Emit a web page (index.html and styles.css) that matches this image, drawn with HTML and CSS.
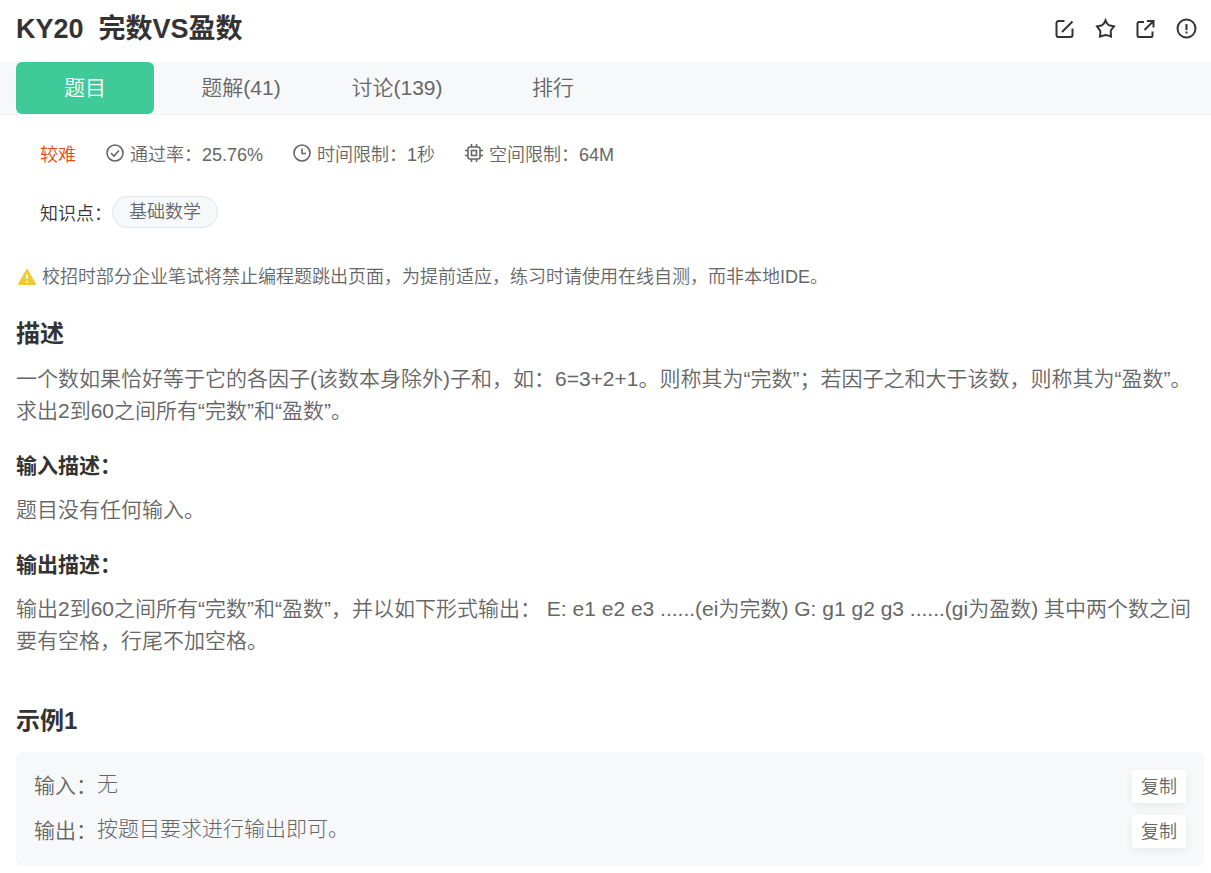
FILE: index.html
```html
<!DOCTYPE html>
<html lang="zh-CN">
<head>
<meta charset="utf-8">
<meta name="viewport" content="width=device-width, initial-scale=1">
<title>KY20 完数VS盈数</title>
<link rel="stylesheet" href="styles.css">
</head>
<body>
<header class="header">
  <h1 class="title"><span>KY20</span><span>完数VS盈数</span></h1>
  <div class="actions">
    <button class="icon-btn" type="button" aria-label="编辑"><svg viewBox="0 0 20 20"><path d="M10.500 2H4.500a2 2 0 0 0-2 2V16a2 2 0 0 0 2 2h12a2 2 0 0 0 2-2V9.500M8 13 18.500 2.500"/></svg></button>
    <button class="icon-btn" type="button" aria-label="收藏"><svg viewBox="0 0 20 20"><path d="M10.500 1.500Q12 5.200 13.800 6.200L19 7.300Q16.200 10.500 15.700 12L16 17.500Q12.300 16 10.500 16L5 17.500Q5.700 14 5.300 12L2 7.300 7.200 6.200Q9 5.200 10.500 1.500Z"/></svg></button>
    <button class="icon-btn" type="button" aria-label="分享"><svg viewBox="0 0 20 20"><path d="M8 3H3A1.500 1.500 0 0 0 1.500 4.500V16.500A1.500 1.500 0 0 0 3 18H15A1.500 1.500 0 0 0 16.500 16.500V12.500M11 2H17.500V8.500M17.500 2 8.500 11"/></svg></button>
    <button class="icon-btn" type="button" aria-label="反馈"><svg viewBox="0 0 20 20"><circle cx="9.500" cy="9.500" r="9"/><path d="M9.500 5v6M9.500 12.500v2"/></svg></button>
  </div>
</header>
<nav class="tabs">
  <a class="tab tab-active" href="#problem">题目</a>
  <a class="tab" href="#solutions">题解(41)</a>
  <a class="tab" href="#discuss">讨论(139)</a>
  <a class="tab" href="#rank">排行</a>
</nav>
<main class="content" id="problem">
  <div class="meta">
    <span class="level">较难</span>
    <span class="meta-item"><svg class="meta-icon" viewBox="0 0 18 18"><circle cx="9" cy="9" r="8"/><path d="M5 9.200 8 12l5-5.500"/></svg>通过率：25.76%</span>
    <span class="meta-item"><svg class="meta-icon" viewBox="0 0 18 18"><circle cx="9" cy="9" r="8"/><path d="M9 4.500V9.500H13"/></svg>时间限制：1秒</span>
    <span class="meta-item"><svg class="meta-icon" viewBox="0 0 18 18"><rect x="3" y="3" width="12" height="12" rx="2"/><rect x="6.500" y="6.500" width="5" height="5"/><path d="M6.500 0v3M11.500 0v3M6.500 15v3M11.500 15v3M0 6.500h3M0 11.500h3M15 6.500h3M15 11.500h3"/></svg>空间限制：64M</span>
  </div>
  <div class="topics"><span class="topics-label">知识点：</span><a class="tag" href="#math">基础数学</a></div>
  <p class="notice"><svg class="warn-icon" viewBox="0 0 18 18"><path fill="#ebcb30" d="M8.200 1.500Q9 .5 9.800 1.500L17.800 15.500Q18.200 17 17 17H1Q-.2 17 .2 15.500Z"/><path stroke="#fff" stroke-width="1.800" d="M9 6.500v4.500M9 12.800v1.800"/></svg><span>校招时部分企业笔试将禁止编程题跳出页面，为提前适应，练习时请使用在线自测，而非本地IDE。</span></p>

  <h2 class="section-title">描述</h2>
  <p class="text">一个数如果恰好等于它的各因子(该数本身除外)子和，如：6=3+2+1。则称其为“完数”；若因子之和大于该数，则称其为“盈数”。<br>求出2到60之间所有“完数”和“盈数”。</p>
  <h3 class="sub-title">输入描述：</h3>
  <p class="text">题目没有任何输入。</p>
  <h3 class="sub-title">输出描述：</h3>
  <p class="text">输出2到60之间所有“完数”和“盈数”，并以如下形式输出： E: e1 e2 e3 ......(ei为完数) G: g1 g2 g3 ......(gi为盈数) 其中两个数之间要有空格，行尾不加空格。</p>

  <h2 class="section-title example-title">示例1</h2>
  <section class="example">
    <div class="example-row"><span class="example-label">输入：</span><span class="example-value">无</span><button class="copy" type="button">复制</button></div>
    <div class="example-row"><span class="example-label">输出：</span><span class="example-value">按题目要求进行输出即可。</span><button class="copy" type="button">复制</button></div>
  </section>
</main>
</body>
</html>
```
FILE: styles.css
```css
* { box-sizing: border-box; }

body {
  margin: 0;
  background: #fff;
  color: #666;
  font-family: "Liberation Sans", "Noto Sans CJK SC", sans-serif;
  font-size: 21px;
  font-weight: 350;
  line-height: 32px;
  text-spacing-trim: space-all;
}

h1, h2, h3, p { margin: 0; }
a { color: inherit; text-decoration: none; }
svg { display: block; overflow: visible; fill: none; stroke: currentColor; stroke-width: 2; }
button { border: 0; padding: 0; font: inherit; color: inherit; cursor: pointer; }

.header {
  display: flex;
  align-items: center;
  justify-content: space-between;
  height: 62px;
  padding: 0 14px 4px 16px;
  color: #333;
}
.title { display: flex; gap: 15px; font-size: 27px; font-weight: 700; }
.actions { display: flex; gap: 21px; }
.icon-btn { width: 20px; height: 20px; background: none; }

.tabs {
  display: flex;
  gap: 18px;
  padding-left: 16px;
  background: #f7f8fa;
  border-bottom: 1px solid #f1f3f5;
}
.tab { width: 138px; line-height: 52px; text-align: center; border-radius: 6px; }
.tab-active { background: #40ca99; color: #fff; }

.content { padding: 27px 7px 7px 16px; }
.meta, .topics { display: flex; padding-left: 24px; font-size: 18px; line-height: 27px; }
.meta { gap: 30px; }
.level { color: #e8490f; }
.meta-item { display: flex; gap: 6px; }
.meta-icon { width: 18px; height: 18px; margin-top: 2px; stroke-width: 1.6; }
.topics { align-items: center; margin-top: 27px; color: #333; }
.topics-label { padding-top: 5px; }
.tag {
  padding: 0 16px;
  line-height: 30px;
  color: #666;
  background: #f7f8fa;
  border: 1px solid #e2e4e8;
  border-radius: 16px;
}
.notice { display: flex; gap: 6px; margin-top: 36px; padding-left: 2px; font-size: 18px; line-height: 27px; }
.warn-icon { flex: none; width: 18px; height: 18px; margin-top: 4px; stroke: none; }

.section-title, .sub-title { color: #333; font-weight: 700; }
.section-title { margin-top: 25px; font-size: 24px; line-height: 36px; }
.sub-title { margin-top: 23px; font-size: 21px; }
.text { margin-top: 11px; padding-right: 8px; }
.sub-title + .text { margin-top: 12px; }
.example-title { margin-top: 46px; }

.example {
  display: grid;
  gap: 12px;
  margin-top: 13px;
  padding: 18px;
  background: #f7f8fa;
  border-radius: 6px;
}
.example-row { display: flex; line-height: 32px; }
.example-value { flex: 1; font-family: "Liberation Mono", "Noto Sans CJK SC", monospace; font-weight: 300; }
.copy {
  width: 54px;
  height: 33px;
  font-size: 18px;
  background: #fff;
  border-radius: 3px;
  box-shadow: 0 3px 9px rgba(0, 0, 0, 0.06);
}
```
